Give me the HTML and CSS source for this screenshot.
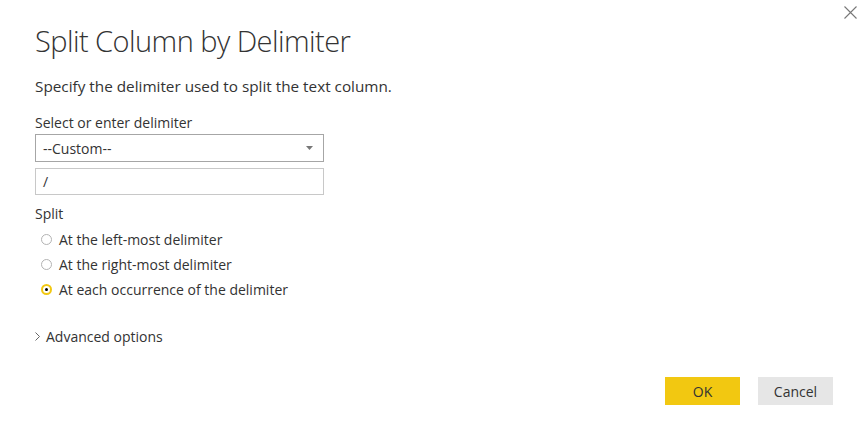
FILE: index.html
```html
<!DOCTYPE html>
<html lang="en">
<head>
  <meta charset="UTF-8">
  <title>Split Column by Delimiter</title>
  <link rel="stylesheet" href="styles.css">
</head>
<body>
  <div class="dialog">
    <button class="closeBtn" type="button" aria-label="Close">
      <svg width="13" height="13" viewBox="0 0 13 13">
        <path d="M0.5 0.5 L12.5 12.5 M12.5 0.5 L0.5 12.5" stroke="#777" stroke-width="1.1" fill="none"/>
      </svg>
    </button>

    <h1 class="title">Split Column by Delimiter</h1>
    <p class="desc">Specify the delimiter used to split the text column.</p>

    <label class="fieldLabel" for="delim">Select or enter delimiter</label>
    <div class="selectBox" id="delim">
      <span>--Custom--</span>
      <svg width="7" height="4" viewBox="0 0 7 4"><path d="M0 0 H7 L3.5 4 Z" fill="#777"/></svg>
    </div>
    <div class="textBox">/</div>

    <div class="fieldLabel splitLabel">Split</div>
    <ul class="radioList">
      <li><span class="radio"></span>At the left-most delimiter</li>
      <li><span class="radio"></span>At the right-most delimiter</li>
      <li><span class="radio checked"></span>At each occurrence of the delimiter</li>
    </ul>

    <div class="advanced">
      <svg width="5" height="9" viewBox="0 0 5 9"><path d="M0.5 0.5 L4.5 4.5 L0.5 8.5" stroke="#666" stroke-width="1" fill="none"/></svg>
      <span>Advanced options</span>
    </div>

    <div class="footer">
      <button class="btn okBtn" type="button">OK</button>
      <button class="btn cancelBtn" type="button">Cancel</button>
    </div>
  </div>
</body>
</html>
```

FILE: styles.css
```css
body {
  margin: 0;
  background: #ffffff;
  font-family: "Open Sans", "Liberation Sans", Arial, sans-serif;
  color: #252423;
}

.dialog {
  position: relative;
  width: 861px;
  height: 425px;
  box-sizing: border-box;
  padding: 0 28px 0 35px;
  display: flex;
  flex-direction: column;
}

.closeBtn {
  position: absolute;
  top: 6px;
  right: 4px;
  border: none;
  background: none;
  padding: 0;
  width: 13px;
  height: 13px;
}

.title {
  margin: 23px 0 0 0;
  font-size: 29px;
  font-weight: 300;
  letter-spacing: -0.55px;
  line-height: 36px;
  color: #333;
}

.desc {
  margin: 17px 0 0 0;
  font-size: 15.3px;
  line-height: 20px;
  color: #333;
}

.fieldLabel {
  display: block;
  margin-top: 18px;
  font-size: 14px;
  line-height: 18px;
  color: #333;
}

.selectBox {
  margin-top: 2px;
  width: 289px;
  height: 28px;
  box-sizing: border-box;
  border: 1px solid #a6a6a6;
  padding: 0 10px 0 7px;
  display: flex;
  align-items: center;
  justify-content: space-between;
  font-size: 14px;
  color: #333;
}

.textBox {
  margin-top: 6px;
  width: 289px;
  height: 27px;
  box-sizing: border-box;
  border: 1px solid #c8c8c8;
  padding: 0 7px;
  display: flex;
  align-items: center;
  font-size: 14px;
  color: #333;
}

.splitLabel {
  margin-top: 10px;
}

.radioList {
  list-style: none;
  margin: 4px 0 0 0;
  padding: 0 0 0 6px;
}

.radioList li {
  display: flex;
  align-items: center;
  height: 25px;
  font-size: 14px;
  color: #333;
}

.radio {
  width: 11px;
  height: 11px;
  box-sizing: border-box;
  border: 1px solid #b3b3b3;
  border-radius: 50%;
  margin-right: 7px;
  display: flex;
  align-items: center;
  justify-content: center;
}

.radio.checked {
  border: 2px solid #f2c811;
}

.radio.checked::after {
  content: "";
  width: 3px;
  height: 3px;
  border-radius: 50%;
  background: #000;
}

.advanced {
  margin-top: 25px;
  display: flex;
  align-items: center;
  gap: 6px;
  font-size: 14px;
  color: #333;
}

.footer {
  margin-top: auto;
  margin-bottom: 20px;
  display: flex;
  justify-content: flex-end;
  gap: 18px;
}

.btn {
  width: 75px;
  height: 28px;
  border: none;
  font-family: inherit;
  font-size: 14px;
  color: #333;
  padding: 0;
}

.okBtn {
  background: #f2c811;
}

.cancelBtn {
  background: #e6e6e6;
}
```
